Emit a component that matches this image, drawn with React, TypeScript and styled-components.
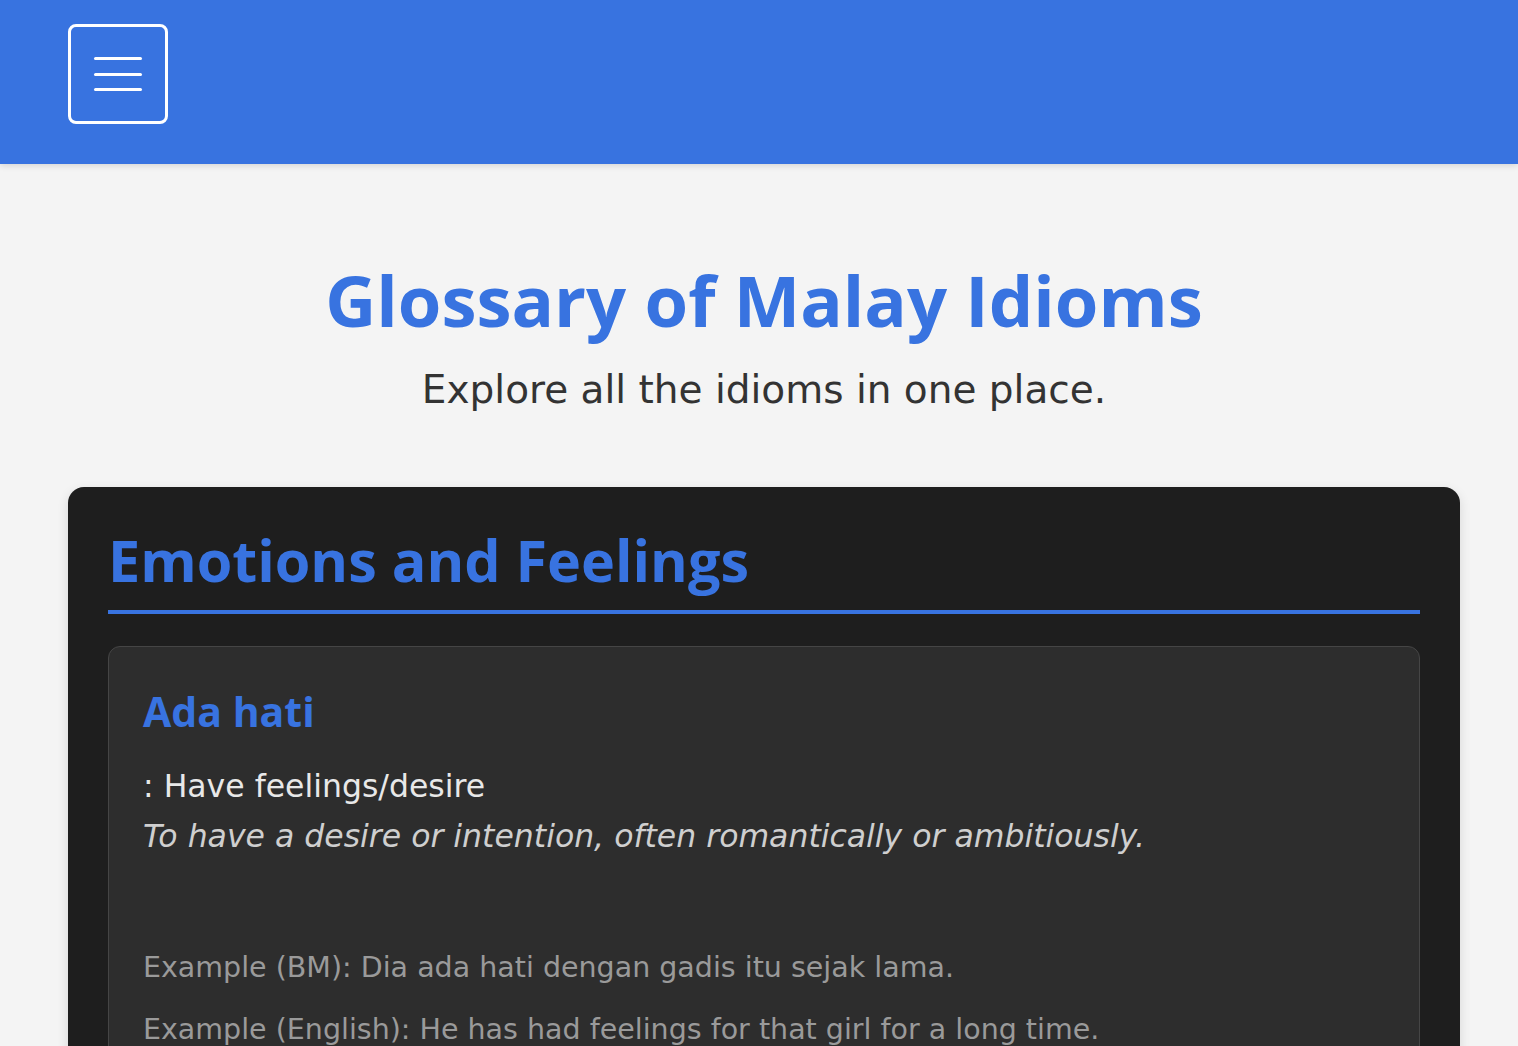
import styled, { createGlobalStyle } from "styled-components";

const GlobalStyle = createGlobalStyle`
  body {
    margin: 0;
    background-color: #f4f4f4;
    font-family: "DejaVu Sans", "Open Sans", sans-serif;
  }
`;

const headingFont = `"Open Sans", "Noto Sans", sans-serif`;

const Header = styled.header`
  height: 164px;
  background-color: #3873e0;
  display: flex;
  align-items: flex-start;
  padding: 24px 68px 0;
  box-sizing: border-box;
  box-shadow: 0 2px 6px rgba(0, 0, 0, 0.12);
`;

const MenuButton = styled.button`
  width: 100px;
  height: 100px;
  border: 3px solid #ffffff;
  border-radius: 8px;
  background: transparent;
  display: flex;
  flex-direction: column;
  align-items: center;
  justify-content: center;
  gap: 12.5px;
  padding: 0;
  cursor: pointer;
`;

const MenuLine = styled.span`
  display: block;
  width: 48px;
  height: 3px;
  border-radius: 2px;
  background-color: #ffffff;
`;

const Main = styled.main`
  padding: 93px 58px 0 68px;
`;

const Title = styled.h1`
  margin: 0;
  text-align: center;
  color: #3873e0;
  font-family: ${headingFont};
  font-size: 70.5px;
  font-weight: 700;
  line-height: 86px;
`;

const Subtitle = styled.p`
  margin: 25px 0 0;
  text-align: center;
  color: #333333;
  font-size: 39px;
  line-height: 43px;
`;

const Section = styled.section`
  margin-top: 76px;
  background-color: #1e1e1e;
  border-radius: 16px;
  padding: 40px;
  box-shadow: 0 4px 12px rgba(0, 0, 0, 0.12);
`;

const SectionTitle = styled.h2`
  margin: 0;
  color: #3873e0;
  font-family: ${headingFont};
  font-size: 57.5px;
  font-weight: 700;
  line-height: 67px;
  padding-bottom: 16px;
  border-bottom: 4px solid #3873e0;
`;

const IdiomCard = styled.article`
  margin-top: 32px;
  background-color: #2d2d2d;
  border: 1px solid #454545;
  border-radius: 12px;
  padding: 38px 34px 40px;
`;

const IdiomName = styled.h3`
  margin: 0;
  color: #3873e0;
  font-family: ${headingFont};
  font-size: 41px;
  font-weight: 700;
  line-height: 53px;
`;

const Meaning = styled.p`
  margin: 28px 0 0;
  color: #e8e8e8;
  font-size: 31.5px;
  line-height: 40px;
`;

const Explanation = styled.p`
  margin: 10px 0 0;
  color: #cfcfcf;
  font-size: 31.5px;
  font-style: italic;
  line-height: 40px;
`;

const Example = styled.p<{ $first?: boolean }>`
  margin: ${(p) => (p.$first ? "92px" : "22px")} 0 0;
  color: #9a9a9a;
  font-size: 28.5px;
  line-height: 40px;
`;

function App() {
  return (
    <>
      <GlobalStyle />
      <Header>
        <MenuButton aria-label="Menu">
          <MenuLine />
          <MenuLine />
          <MenuLine />
        </MenuButton>
      </Header>
      <Main>
        <Title>Glossary of Malay Idioms</Title>
        <Subtitle>Explore all the idioms in one place.</Subtitle>
        <Section>
          <SectionTitle>Emotions and Feelings</SectionTitle>
          <IdiomCard>
            <IdiomName>Ada hati</IdiomName>
            <Meaning>: Have feelings/desire</Meaning>
            <Explanation>
              To have a desire or intention, often romantically or ambitiously.
            </Explanation>
            <Example $first>
              Example (BM): Dia ada hati dengan gadis itu sejak lama.
            </Example>
            <Example>
              Example (English): He has had feelings for that girl for a long time.
            </Example>
          </IdiomCard>
        </Section>
      </Main>
    </>
  );
}

export default App;
